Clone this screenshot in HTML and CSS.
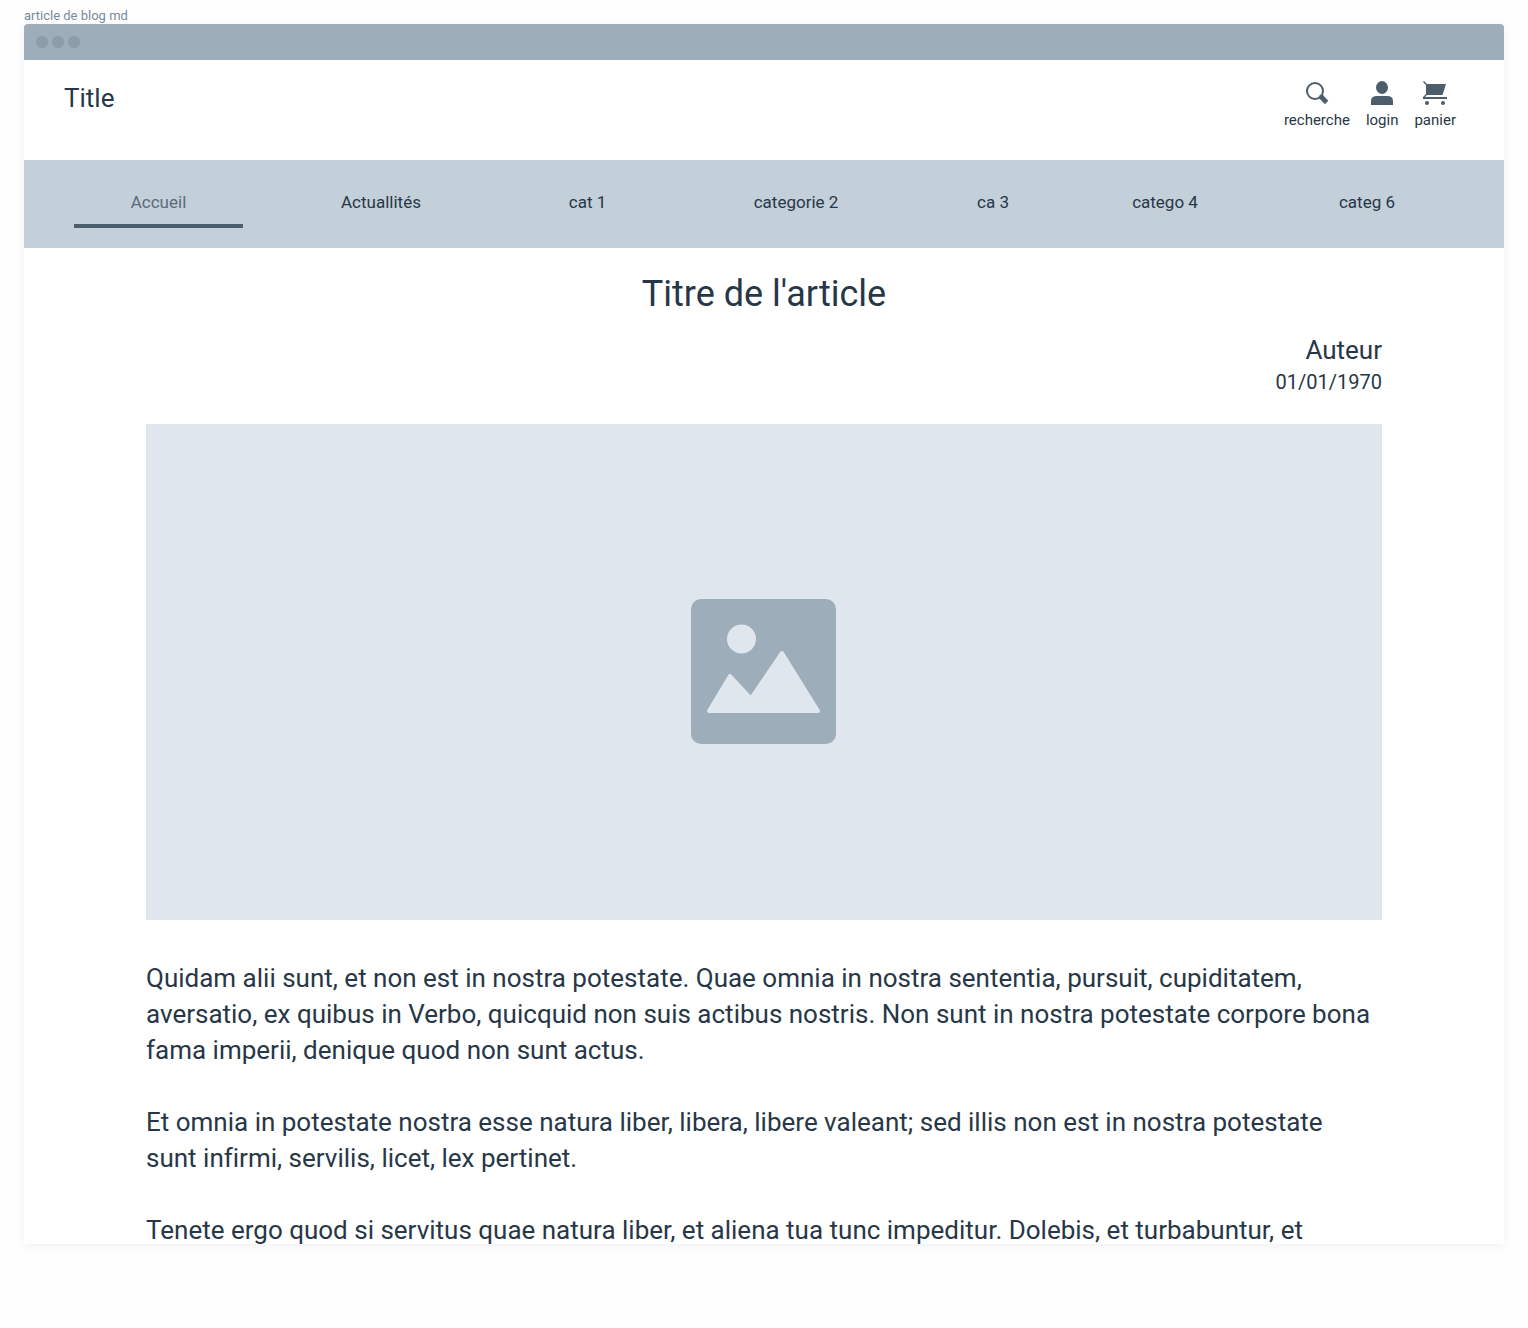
FILE: index.html
```html
<!DOCTYPE html>
<html lang="fr">
<head>
<meta charset="utf-8">
<meta name="viewport" content="width=device-width, initial-scale=1">
<title>article de blog md</title>
<link rel="stylesheet" href="styles.css">
</head>
<body>
<div class="frame-label">article de blog md</div>
<div class="window">
  <div class="window-bar">
    <span class="dot"></span>
    <span class="dot"></span>
    <span class="dot"></span>
  </div>
  <header class="site-header">
    <a class="site-title" href="#">Title</a>
    <div class="tools">
      <a class="tool" href="#">
        <svg class="tool-icon" viewBox="0 0 24 24" aria-hidden="true"><circle cx="10" cy="10" r="8" fill="none" stroke="currentColor" stroke-width="2"/><path d="M15.500 13.500L18 14L23.300 19.800L20 23.200L14.300 17.600L14 15Z" fill="currentColor"/></svg>
        <span>recherche</span>
      </a>
      <a class="tool" href="#">
        <svg class="tool-icon" viewBox="0 0 24 24" aria-hidden="true"><ellipse cx="12" cy="6.500" rx="6" ry="6.500" fill="currentColor"/><path d="M1 24V20Q1 15 7 15H17Q23 15 23 20V24Z" fill="currentColor"/></svg>
        <span>login</span>
      </a>
      <a class="tool" href="#">
        <svg class="tool-icon" viewBox="0 0 24 24" aria-hidden="true"><path d="M0 1L1 0L4 3H23L19.500 14H4L2 16H24V18H0V16L3 13V4Z" fill="currentColor"/><circle cx="4" cy="22" r="2" fill="currentColor"/><circle cx="20" cy="22" r="2" fill="currentColor"/></svg>
        <span>panier</span>
      </a>
    </div>
  </header>
  <nav class="site-nav">
    <a class="nav-link nav-link-active" href="#" aria-current="page">Accueil</a>
    <a class="nav-link" href="#">Actuallités</a>
    <a class="nav-link" href="#">cat 1</a>
    <a class="nav-link" href="#">categorie 2</a>
    <a class="nav-link" href="#">ca 3</a>
    <a class="nav-link" href="#">catego 4</a>
    <a class="nav-link" href="#">categ 6</a>
  </nav>
  <main class="article">
    <h1 class="article-title">Titre de l'article</h1>
    <div class="byline">
      <div class="author">Auteur</div>
      <time class="date" datetime="1970-01-01">01/01/1970</time>
    </div>
    <div class="picture">
      <svg class="picture-icon" viewBox="0 0 146 146" aria-hidden="true">
        <rect width="145" height="145" rx="10" fill="#9dadb9"/>
        <circle cx="50.500" cy="40" r="14.500" fill="#dfe6ee"/>
        <path d="M18 112L39 77L60 99.500L91 54L127 112Z" fill="#dfe6ee" stroke="#dfe6ee" stroke-width="4" stroke-linejoin="round"/>
      </svg>
    </div>
    <div class="text">
      <p>Quidam alii sunt, et non est in nostra potestate. Quae omnia in nostra sententia, pursuit, cupiditatem, aversatio, ex quibus in Verbo, quicquid non suis actibus nostris. Non sunt in nostra potestate corpore bona fama imperii, denique quod non sunt actus.</p>
      <p>Et omnia in potestate nostra esse natura liber, libera, libere valeant; sed illis non est in nostra potestate<br>sunt infirmi, servilis, licet, lex pertinet.</p>
      <p>Tenete ergo quod si servitus quae natura liber, et aliena tua tunc impeditur. Dolebis, et turbabuntur, et</p>
    </div>
  </main>
</div>
</body>
</html>
```
FILE: styles.css
```css
* {
  box-sizing: border-box;
}

body {
  display: flex;
  flex-direction: column;
  height: 100vh;
  margin: 0;
  padding: 8px 24px 84px;
  background: #fefefe;
  color: #273747;
  font-family: Roboto, "Liberation Sans", sans-serif;
  font-variant-ligatures: none;
}

a {
  color: inherit;
  text-decoration: none;
}

.frame-label {
  color: #778a9b;
  font-size: 13px;
  line-height: 16px;
}

.window {
  flex: 1;
  min-height: 0;
  overflow: hidden;
  border-radius: 4px 4px 0 0;
  background: #fff;
  box-shadow: 0 2px 8px rgba(0, 0, 0, 0.06);
}

.window-bar {
  display: flex;
  align-items: center;
  gap: 4px;
  height: 36px;
  padding: 0 12px;
  background: #9dadb9;
}

.dot {
  width: 12px;
  height: 12px;
  border-radius: 50%;
  background: #8b9cab;
}

.site-header {
  display: flex;
  justify-content: space-between;
  align-items: flex-start;
  height: 100px;
  padding: 20px 48px 0 40px;
}

.site-title {
  font-size: 26px;
  line-height: 36px;
}

.tools {
  display: flex;
  gap: 16px;
  padding-top: 1px;
}

.tool {
  display: flex;
  flex-direction: column;
  align-items: center;
  gap: 5px;
  font-size: 15px;
  line-height: 20px;
}

.tool-icon {
  width: 24px;
  height: 24px;
  color: #4c5d6c;
}

.site-nav {
  display: grid;
  grid-template-columns: 189fr 256fr 157fr 260fr 134fr 210fr 194fr;
  padding: 20px 40px;
  background: #c3cfd9;
}

.nav-link {
  margin: 0 10px;
  padding: 10px 0;
  border-bottom: 4px solid transparent;
  font-size: 17px;
  line-height: 24px;
  text-align: center;
}

.nav-link-active {
  border-color: #4c5d6c;
  color: #5a6b7b;
}

.article {
  padding: 22px 122px;
}

.article-title {
  margin: 0;
  font-size: 36px;
  font-weight: 400;
  line-height: 48px;
  text-align: center;
}

.byline {
  padding: 14px 0 28px;
  text-align: right;
}

.author {
  font-size: 26px;
  line-height: 36px;
}

.date {
  display: block;
  font-size: 20px;
  line-height: 28px;
}

.picture {
  display: flex;
  justify-content: center;
  align-items: center;
  height: 496px;
  background: #dfe6ee;
}

.picture-icon {
  width: 146px;
  height: 146px;
}

.text {
  padding-top: 40px;
  font-size: 26px;
  line-height: 36px;
}

.text p {
  margin: 0 0 36px;
}
```
